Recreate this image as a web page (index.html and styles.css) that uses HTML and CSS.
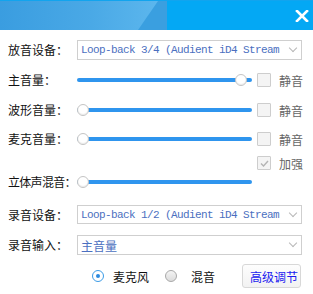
FILE: index.html
```html
<!DOCTYPE html>
<html lang="zh-CN">
<head>
  <meta charset="UTF-8">
  <title>音频设置</title>
  <link rel="stylesheet" href="styles.css">
</head>
<body>
  <div class="header">
    <div class="header-tab">
      <div class="header-shine"></div>
    </div>
    <div class="header-close">
      <svg width="14" height="12" viewBox="0 0 14 12">
        <path d="M2 1 L12 11 M12 1 L2 11" stroke="#fff" stroke-width="2.6" stroke-linecap="square"/>
      </svg>
    </div>
  </div>

  <div class="content">
    <div class="row row-play">
      <span class="label">放音设备：</span>
      <div class="select mono">
        <span class="select-text">Loop-back 3/4 (Audient iD4 Stream</span>
        <span class="chevron"></span>
      </div>
    </div>

    <div class="row row-master">
      <span class="label">主音量：</span>
      <div class="slider">
        <div class="slider-track"></div>
        <div class="slider-thumb" style="left: 158px;"></div>
      </div>
      <label class="check">
        <span class="check-box"></span>
        <span class="check-text">静音</span>
      </label>
    </div>

    <div class="row row-wave">
      <span class="label">波形音量：</span>
      <div class="slider">
        <div class="slider-track"></div>
        <div class="slider-thumb" style="left: 0px;"></div>
      </div>
      <label class="check">
        <span class="check-box"></span>
        <span class="check-text">静音</span>
      </label>
    </div>

    <div class="row row-mic">
      <span class="label">麦克音量：</span>
      <div class="slider">
        <div class="slider-track"></div>
        <div class="slider-thumb" style="left: 0px;"></div>
      </div>
      <label class="check">
        <span class="check-box"></span>
        <span class="check-text">静音</span>
      </label>
    </div>

    <div class="row row-boost">
      <label class="check">
        <span class="check-box checked">
          <svg width="9" height="7" viewBox="0 0 9 7">
            <path d="M1 3.5 L3.5 6 L8 1" fill="none" stroke="#b4b4b4" stroke-width="1.4"/>
          </svg>
        </span>
        <span class="check-text">加强</span>
      </label>
    </div>

    <div class="row row-stereo">
      <span class="label label-long">立体声混音：</span>
      <div class="slider">
        <div class="slider-track"></div>
        <div class="slider-thumb" style="left: 0px;"></div>
      </div>
    </div>

    <div class="row row-rec">
      <span class="label">录音设备：</span>
      <div class="select mono">
        <span class="select-text">Loop-back 1/2 (Audient iD4 Stream</span>
        <span class="chevron"></span>
      </div>
    </div>

    <div class="row row-input">
      <span class="label">录音输入：</span>
      <div class="select">
        <span class="select-text">主音量</span>
        <span class="chevron"></span>
      </div>
    </div>

    <div class="row row-source">
      <label class="radio radio-mic">
        <span class="radio-dot checked"></span>
        <span class="radio-text">麦克风</span>
      </label>
      <label class="radio radio-mix">
        <span class="radio-dot"></span>
        <span class="radio-text">混音</span>
      </label>
      <button class="button">高级调节</button>
    </div>
  </div>
</body>
</html>
```

FILE: styles.css
```css
body {
  width: 313px;
  height: 294px;
  margin: 0;
  overflow: hidden;
  background: #fff;
  font-family: "Noto Sans CJK SC", "Noto Sans", sans-serif;
  font-size: 12px;
  color: #111;
}

.header {
  display: flex;
  height: 29px;
  border-top: 1px solid #12a4ee;
  background: #04a8f4;
}

.header-tab {
  width: 167px;
  background: #3a9fe0;
}

.header-shine {
  height: 100%;
  background: linear-gradient(90deg, #3a9de0 0%, #4aa9e6 55%, #5eb8ee 100%);
  clip-path: polygon(0 0, 158px 0, 138px 100%, 0 100%);
}

.header-close {
  display: flex;
  align-items: center;
  justify-content: flex-end;
  flex: 1;
  padding-right: 4px;
}

.content {
  padding-left: 8px;
}

.row {
  display: flex;
  align-items: center;
  height: 20px;
}

.row-play   { margin-top: 10px; }
.row-master { margin-top: 10px; }
.row-wave   { margin-top: 10px; }
.row-mic    { margin-top: 9px; }
.row-boost  { margin-top: 5px; height: 18px; padding-left: 249px; }
.row-stereo { margin-top: 0; }
.row-rec    { margin-top: 13px; height: 19px; }
.row-input  { margin-top: 11px; }
.row-source { margin-top: 9px; height: 24px; }

.label {
  width: 69px;
  flex-shrink: 0;
  line-height: 1;
  white-space: nowrap;
}

/* six characters do not fit the label column, squeeze them a little */
.label-long {
  letter-spacing: -0.7px;
}

.select {
  display: flex;
  align-items: center;
  box-sizing: border-box;
  width: 225px;
  height: 100%;
  padding-left: 3px;
  border: 1px solid #cfcfcf;
  color: #4b6fc0;
  overflow: hidden;
}

.select.mono {
  font-family: "Liberation Mono", monospace;
  font-size: 11px;
  letter-spacing: -0.6px;
}

.select-text {
  flex: 1;
  white-space: nowrap;
  overflow: hidden;
}

.chevron {
  width: 5px;
  height: 5px;
  margin: 0 5px 4px 4px;
  border-right: 1px solid #b8b8b8;
  border-bottom: 1px solid #b8b8b8;
  transform: rotate(45deg);
}

.slider {
  position: relative;
  width: 175px;
  height: 12px;
}

.slider-track {
  margin-top: 4px;
  height: 4px;
  border-radius: 2px;
  background: #2f95ee;
}

.slider-thumb {
  position: absolute;
  top: 0;
  box-sizing: border-box;
  width: 12px;
  height: 12px;
  border: 1px solid #c4c4c4;
  border-radius: 50%;
  background: #fff;
  box-shadow: inset 0 -1px 1px rgba(0, 0, 0, 0.08);
}

.check {
  display: flex;
  align-items: center;
  margin-left: 5px;
}

.row-boost .check {
  margin-left: 0;
}

.check-box {
  display: flex;
  align-items: center;
  justify-content: center;
  box-sizing: border-box;
  width: 14px;
  height: 14px;
  border: 1px solid #cdcdcd;
  border-radius: 1px;
  background: #f4f4f4;
}

.check-text {
  margin-left: 8px;
  color: #666;
}

.radio {
  display: flex;
  align-items: center;
}

.radio-mic { margin-left: 84px; }
.radio-mix { margin-left: 16px; }

.radio-dot {
  display: flex;
  align-items: center;
  justify-content: center;
  box-sizing: border-box;
  width: 12px;
  height: 12px;
  border: 1px solid #a8a8a8;
  border-radius: 50%;
  background: linear-gradient(180deg, #f4f4f4, #dcdcdc);
}

.radio-dot.checked {
  border-color: #3b9be6;
  background: #fff;
}

.radio-dot.checked::after {
  content: "";
  width: 4px;
  height: 4px;
  border-radius: 50%;
  background: #2b8ae0;
}

.radio-text {
  margin-left: 9px;
}

.radio-mix .radio-text {
  margin-left: 14px;
}

.button {
  box-sizing: border-box;
  width: 59px;
  height: 24px;
  margin-left: 27px;
  padding: 0 0 0 7px;
  text-align: left;
  border: 1px solid #d8d8d8;
  border-radius: 3px;
  background: linear-gradient(180deg, #fdfdfd, #f2f2f2);
  color: #1a1af0;
  font-family: "Noto Sans CJK SC", sans-serif;
  font-size: 12px;
}
```
